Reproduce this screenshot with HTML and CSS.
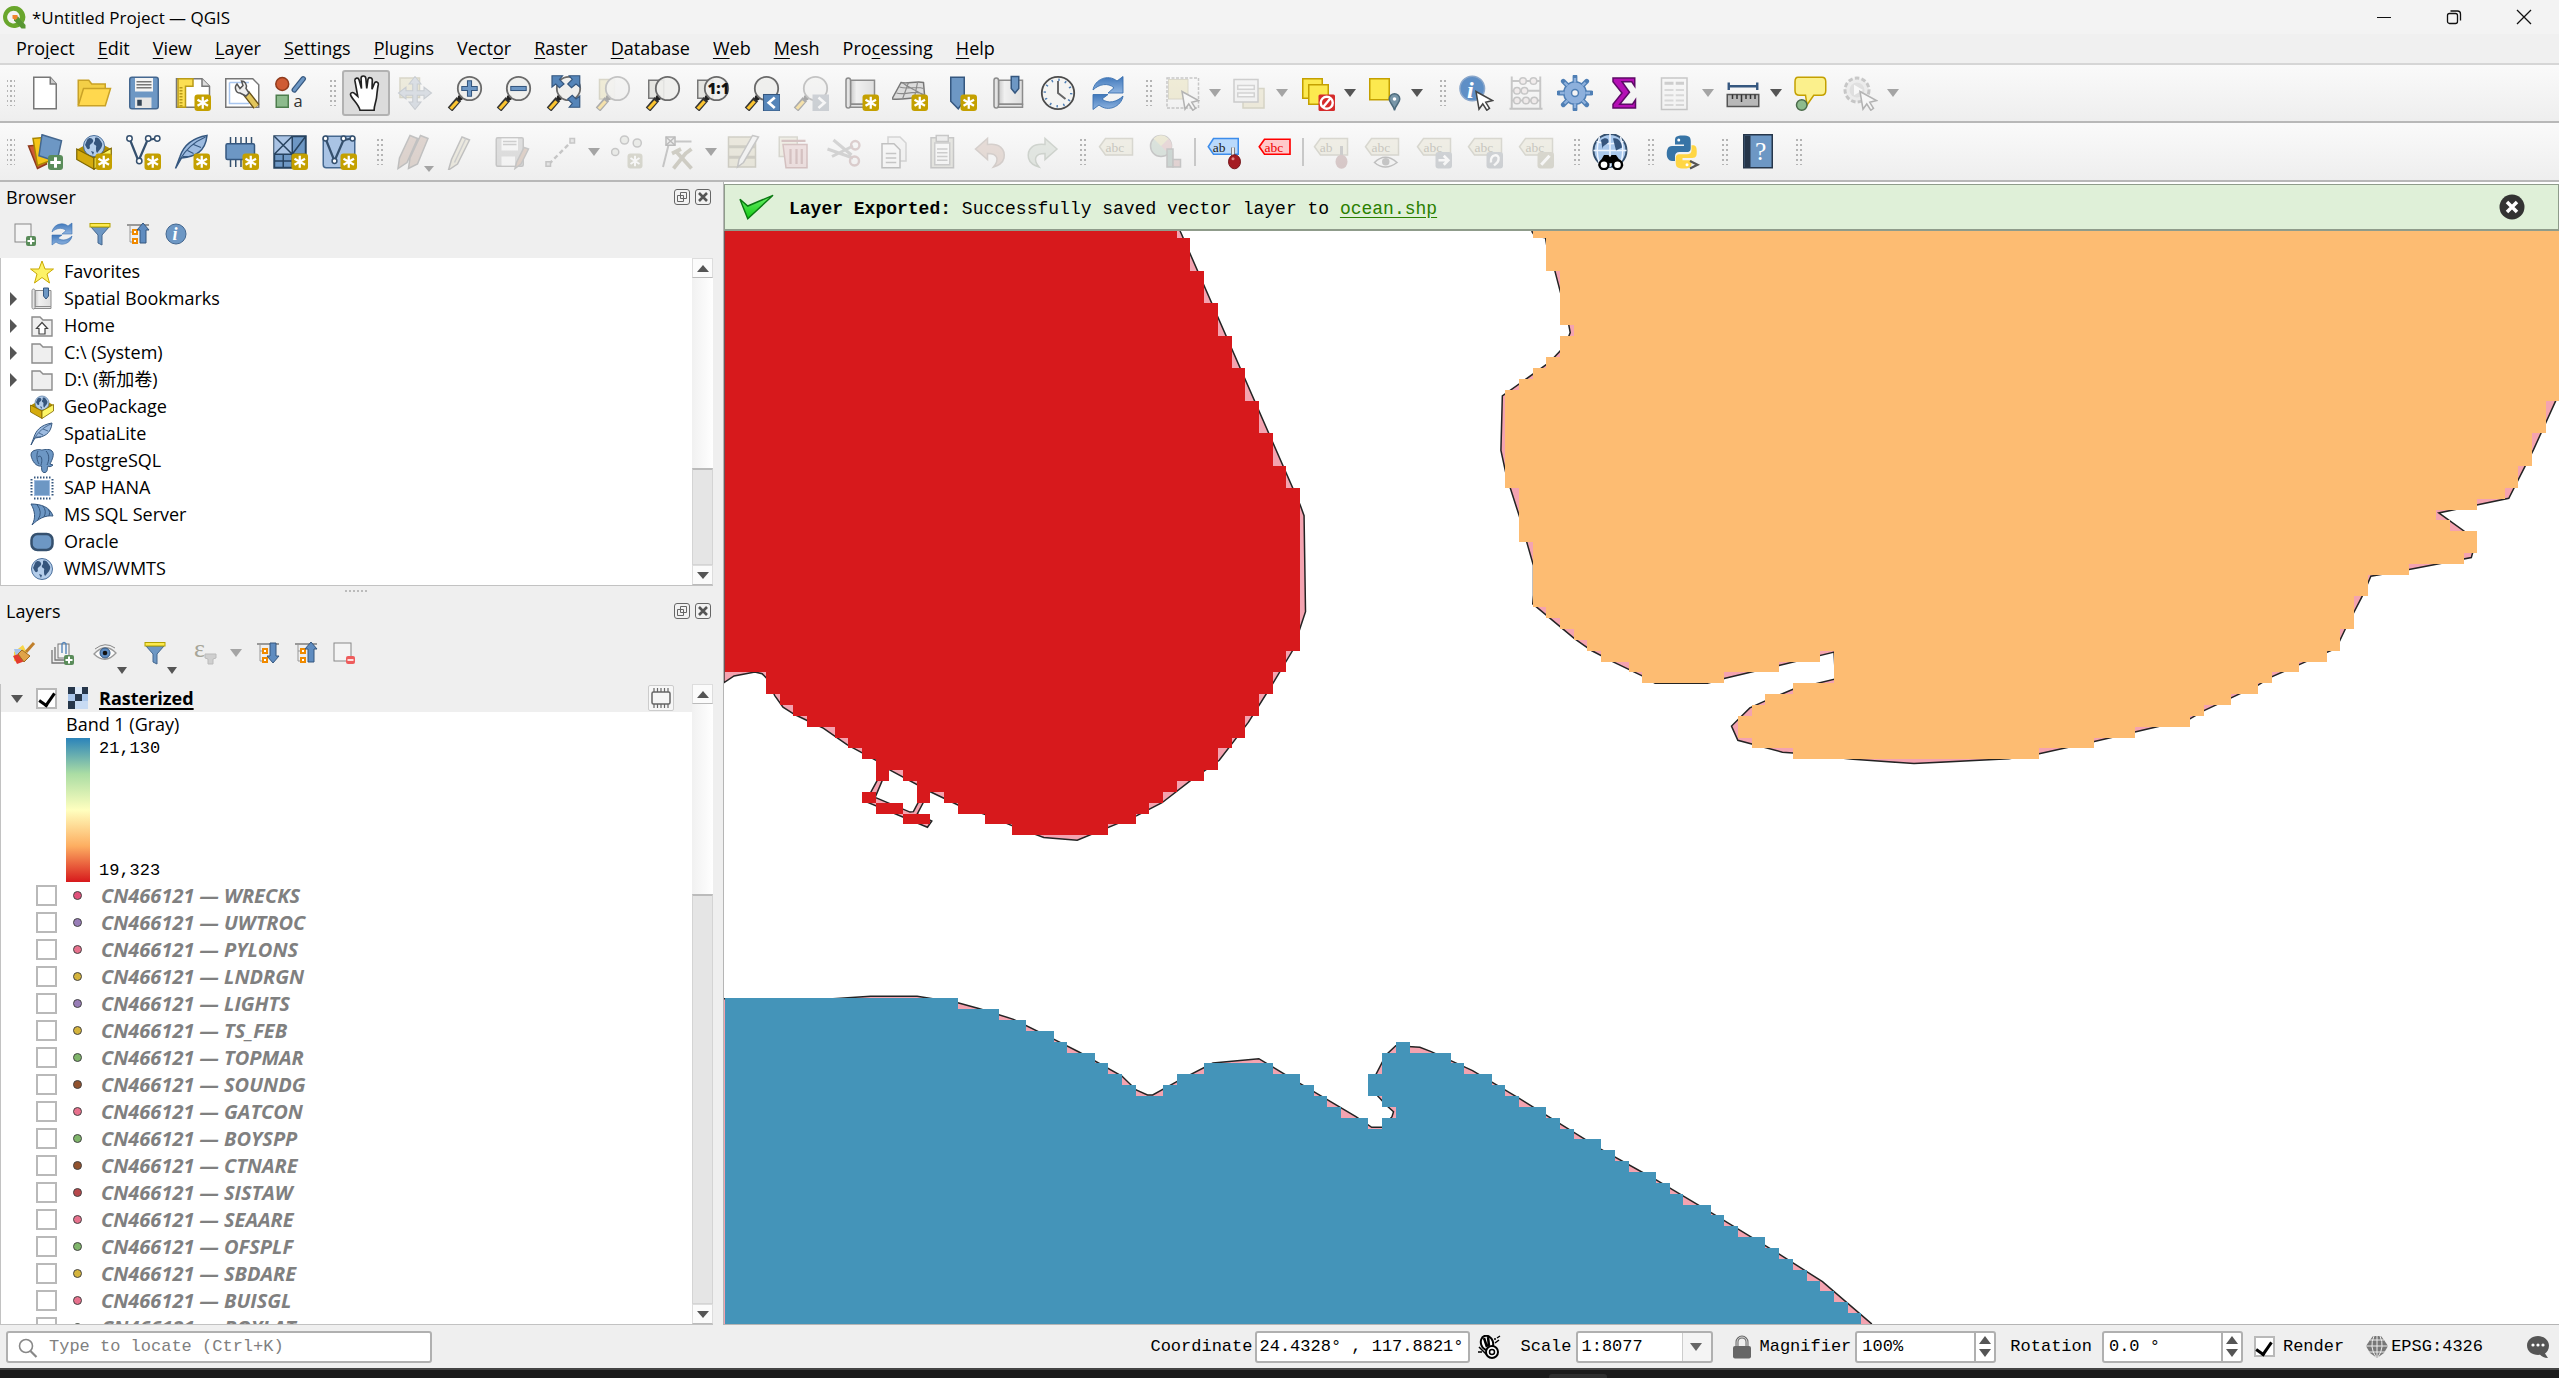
FILE: index.html
```html
<!DOCTYPE html>
<html lang="en">
<head>
<meta charset="utf-8">
<title>*Untitled Project — QGIS</title>
<link rel="stylesheet" href="styles.css">
</head>
<body>
<svg class="paints" aria-hidden="true">
<defs>
<linearGradient id="grey" x1="0" x2="1"><stop offset="0" stop-color="#c9c9c9"/><stop offset=".25" stop-color="#f0f0f0"/><stop offset="1" stop-color="#dedede"/></linearGradient>
<linearGradient id="blue" x1="0" y1="0" x2="0" y2="1"><stop offset="0" stop-color="#3f77bb"/><stop offset="1" stop-color="#8fb4e0"/></linearGradient>
<linearGradient id="tick" x1="0" y1="0" x2="0" y2="1"><stop offset="0" stop-color="#6cf26c"/><stop offset="1" stop-color="#12c812"/></linearGradient>
</defs>
</svg>
<svg class="sprite" aria-hidden="true">
<symbol id="b-new" viewBox="0 0 24 24"><rect x="13" y="13" width="11" height="11" rx="2" fill="#c4a000"/><path d="M18.500 14.500v8M15 16.500l7 4M22 16.500l-7 4" stroke="#fff" stroke-width="1.500"/></symbol>
<symbol id="b-add" viewBox="0 0 24 24"><rect x="14" y="14" width="10" height="10" rx="2" fill="#5a8c5a"/><path d="M19 15.500v7M15.500 19h7" stroke="#fff" stroke-width="2"/></symbol>
<symbol id="lens" viewBox="0 0 24 24"><path d="M8 16l-6 7" stroke="#333" stroke-width="4"/><path d="M7 17.500l-4.500 5" stroke="#fcc530" stroke-width="2.200"/><circle cx="9" cy="15" r="1.800" fill="#222"/><circle cx="15" cy="9" r="7.800" fill="#eeeeec" fill-opacity=".9" stroke="#6a6a6a" stroke-width="1.200"/></symbol>
<symbol id="cursor" viewBox="0 0 24 24"><path d="M12 11l11 6-4.500 1.200 2.500 4-1.800 1.300-2.700-4.200-2.500 3.500z" fill="#fff" stroke="#444" stroke-width="1"/></symbol>
<symbol id="tag" viewBox="0 0 24 24"><path d="M1 8.500L5 3h18v11H5z" fill="#e3dfc8" stroke="#a5a38e"/></symbol>
<symbol id="globe" viewBox="0 0 24 24"><circle cx="12" cy="12" r="10.500" fill="#b4cdea" stroke="#4a6f9c"/><path d="M5 6c2-3 5-2 6 0s-2 4-3 5 1 3-1 4-3-3-4-4M13 4c2-1 4 0 5 2s3 3 2 6-3 4-4 6-2 0-2-3 1-3-1-4-1-3 0-4M9 17l3 1-1 3z" fill="#35557d"/></symbol>

<symbol id="i-new" viewBox="0 0 24 24"><path d="M4.500 1.500h11l4 4.500v16.500h-15z" fill="#fff" stroke="#777"/><path d="M15.500 1.500v4.500h4" fill="#ccc" stroke="#777"/></symbol>
<symbol id="i-open" viewBox="0 0 24 24"><path d="M1.500 20V3.500h7l2 2.500h9v4" fill="#f3cf47" stroke="#c9a227"/><path d="M1.500 20.500L5 9h18l-3.500 11.500z" fill="#ffd84e" stroke="#c9a227"/></symbol>
<symbol id="i-save" viewBox="0 0 24 24"><rect x="2.500" y="1.500" width="19" height="21" rx="1.500" fill="#6d97c4" stroke="#44678f"/><rect x="6" y="2" width="12" height="9" fill="#f4f4f4"/><path d="M7 4.500h10M7 6.500h10M7 8.500h10" stroke="#777"/><rect x="6" y="15" width="11" height="7" fill="#e6e6e6"/><rect x="7.500" y="16.500" width="3" height="4" fill="#345"/></symbol>
<symbol id="i-layout" viewBox="0 0 24 24"><path d="M1 2.500h17l5 5v14H1z" fill="#fff" stroke="#777"/><path d="M18 2.500v5h5" fill="#ddd" stroke="#777"/><path d="M2 2.500h10v5H7v14H2z" fill="#fcdf52" stroke="#b99b18"/><path d="M4 8v13" stroke="#b99b18" stroke-dasharray="1 1" stroke-width="2"/><use href="#b-new"/></symbol>
<symbol id="i-manager" viewBox="0 0 24 24"><path d="M.5 2.500h18l4 4v15H.5z" fill="#fff" stroke="#777"/><path d="M3 5h13M3 5v14h13" stroke="#a9c6ef" fill="none"/><path d="M14 12l7 9" stroke="#665018" stroke-width="5"/><path d="M14 12l7 9" stroke="#e2c65c" stroke-width="3.200"/><path d="M8 6c-2 2-1 6 2 6l4 2 2-2-2-3c1-3-1-5-3-5l1 3-2 2z" fill="#eee" stroke="#555"/></symbol>
<symbol id="i-style" viewBox="0 0 24 24"><circle cx="5.500" cy="6" r="4.300" fill="#cf5b34" stroke="#8f3a1c"/><path d="M13.500 10l6-7.500" stroke="#35577f" stroke-width="3.600" stroke-linecap="round"/><path d="M13.500 10l6-7.500" stroke="#6d97c4" stroke-width="2" stroke-linecap="round"/><rect x="1.500" y="13.500" width="8" height="8" fill="#8dbb8d" stroke="#4d7d4d"/><text x="13" y="21.500" font-size="11" class="glyph">a</text></symbol>
<symbol id="i-hand" viewBox="0 0 24 24"><path d="M8 23.500c-1-4-4-6-6-9.500-1-2 .8-3 2.300-1.800l2.200 2L4.600 3.800c-.2-2 2.300-2.400 2.800-.5L9 9 8.700 2.300c0-2.200 3-2.200 3.200 0L12.500 9l.8-6c.4-1.800 2.900-1.500 2.900.4L16 9.500l1.600-4c.7-1.600 2.800-1 2.600.8-.7 3-.8 6-1.200 9-.4 3-1.600 5-1.600 8.200z" fill="#fff" stroke="#222" stroke-width="1.100"/></symbol>
<symbol id="i-panto" viewBox="0 0 24 24"><rect x="2" y="2" width="13" height="13" fill="#ddd6b0" stroke="#a59e78"/><path d="M12 1l4 5h-2.500v4.500H18V8l5 4-5 4v-2.500h-4.500V18H16l-4 5-4-5h2.500v-4.500H6V16l-5-4 5-4v2.500h4.500V6H8z" fill="#aab6c6" stroke="#7c8896" stroke-width=".7"/></symbol>
<symbol id="i-zin" viewBox="0 0 24 24"><use href="#lens"/><path d="M15 3.500v11M9.500 9h11" stroke="#35577f" stroke-width="3.400"/><path d="M15 4.200v9.600M10.200 9h9.600" stroke="#6d97c4" stroke-width="2"/></symbol>
<symbol id="i-zout" viewBox="0 0 24 24"><use href="#lens"/><path d="M9.500 9h11" stroke="#35577f" stroke-width="3.400"/><path d="M10.200 9h9.600" stroke="#6d97c4" stroke-width="2"/></symbol>
<symbol id="i-zfull" viewBox="0 0 24 24"><use href="#lens"/><path d="M4 .5h7L9 3l3 3-3 2.500L6.500 6 4 8zM22.500.5h-7l2 2.500-3 3L17 8.500 20 6l2.500 2zM22.500 21.500h-7l2-2.500-3-3 3-2.500 2.500 2.500 2.500-2z" fill="#5585b9" stroke="#35577f" stroke-width=".8"/></symbol>
<symbol id="i-zsel" viewBox="0 0 24 24"><rect x="3" y="3" width="10" height="13" fill="#e3d9a0" stroke="#a59e78"/><use href="#lens"/></symbol>
<symbol id="i-zlay" viewBox="0 0 24 24"><rect x="2.500" y="3.500" width="10" height="12" fill="#e4e4e0" stroke="#777"/><use href="#lens"/></symbol>
<symbol id="i-znat" viewBox="0 0 24 24"><use href="#i-zlay"/><text x="9" y="12.500" font-size="10" class="glyph heavy">1:1</text></symbol>
<symbol id="i-zlast" viewBox="0 0 24 24"><use href="#lens"/><rect x="13" y="13" width="11" height="11" fill="#5585b9" stroke="#35577f" stroke-width=".7"/><path d="M20.500 15l-4 3.500 4 3.500" fill="none" stroke="#fff" stroke-width="1.800"/></symbol>
<symbol id="i-znext" viewBox="0 0 24 24"><use href="#lens"/><rect x="13" y="13" width="11" height="11" fill="#8b95a1"/><path d="M17 15l4 3.500-4 3.500" fill="none" stroke="#fff" stroke-width="1.800"/></symbol>
<symbol id="scroll" viewBox="0 0 24 24"><path d="M5 3.500h16v16H5z" fill="url(#grey)" stroke="#8c8c8c"/><path d="M2 3.500c0-2 3-2 3 0v17c0 2-3 2-3 0zM4 21.500h17v-2H5" fill="#e4e4e4" stroke="#8c8c8c"/></symbol>
<symbol id="i-mapview" viewBox="0 0 24 24"><use href="#scroll"/><use href="#b-new"/></symbol>
<symbol id="i-3d" viewBox="0 0 24 24"><path d="M6 5c4 1 10-1 15 0l1 12c-6-4-12 0-22-1z" fill="#dcdcdc" stroke="#777"/><path d="M5 8c6 2 11-1 16 1M3 12c6 2 12-3 19 1.500M11 5l-4 11M17 5l-2 10M7 5c4 4 10 5 14 9" fill="none" stroke="#8a8a8a" stroke-width=".8"/><use href="#b-new"/></symbol>
<symbol id="i-newbm" viewBox="0 0 24 24"><path d="M6.500 1.500h9V17l-4 5.500-5-5z" fill="#6d97c4" stroke="#35577f"/><use href="#b-new"/></symbol>
<symbol id="i-bm" viewBox="0 0 24 24"><use href="#scroll"/><path d="M13.500 1h5v8L16 12l-2.500-3z" fill="#6d97c4" stroke="#35577f"/></symbol>
<symbol id="i-clock" viewBox="0 0 24 24"><circle cx="12" cy="12" r="10.800" fill="#f4f4f2" stroke="#4b4b4b" stroke-width="1.200"/><circle cx="12" cy="12" r="8.800" fill="none" stroke="#4f7fb5" stroke-width="1.600" stroke-dasharray="1 3.600"/><path d="M12 4v8l5 4" fill="none" stroke="#666" stroke-width="1.300"/></symbol>
<symbol id="i-refresh" viewBox="0 0 24 24"><path d="M2 10C3 3 12-1 18 4l4-3v11H12l4-3.500C12 5 6 6 2 10z" fill="url(#blue)" stroke="#3a70b0" stroke-width=".6"/><path d="M22 14c-1 7-10 11-16 6l-4 3V13h10l-4 3c4 3.500 10 2 14-2z" fill="url(#blue)" stroke="#3a70b0" stroke-width=".6"/></symbol>
<symbol id="i-select" viewBox="0 0 24 24"><rect x="2" y="2" width="21" height="20" fill="none" stroke="#777" stroke-dasharray="2 1"/><rect x="3" y="3" width="13" height="13" fill="#e3d9a0" stroke="#a59e78" stroke-width=".6"/><use href="#cursor"/></symbol>
<symbol id="i-form" viewBox="0 0 24 24"><rect x="8" y="9" width="14" height="13" fill="#e3d9b0" stroke="#a59e78"/><rect x="2" y="3" width="16" height="15" fill="#eee" stroke="#888"/><path d="M4.500 7h11v2.500h-11zM4.500 12h11v2.500h-11z" fill="#fff" stroke="#999"/></symbol>
<symbol id="i-desel" viewBox="0 0 24 24"><rect x="2.500" y="2.500" width="13" height="13" fill="#fce94f" stroke="#c4a000"/><rect x="6.500" y="6.500" width="13" height="13" fill="#fce94f" stroke="#c4a000"/><rect x="13" y="13" width="11" height="11" rx="1" fill="#d52b2b"/><circle cx="18.500" cy="18.500" r="4" fill="none" stroke="#fff" stroke-width="1.600"/><path d="M16 21.500l5-6" stroke="#fff" stroke-width="1.600"/></symbol>
<symbol id="i-selloc" viewBox="0 0 24 24"><rect x="2.500" y="2.500" width="13" height="14" fill="#fce94f" stroke="#c4a000"/><path d="M19 23.500c-1-4-3.500-5-3.500-7.500a3.500 3.500 0 017 0c0 2.500-2.500 3.500-3.500 7.500z" fill="#7896a8" stroke="#4c6a7c"/><circle cx="19" cy="16" r="1.200" fill="#fff"/></symbol>
<symbol id="i-ident" viewBox="0 0 24 24"><circle cx="9.500" cy="9" r="8.200" fill="#5f8fc6" stroke="#8aa7cb"/><text x="6" y="15" font-size="16" class="info">i</text><use href="#cursor"/></symbol>
<symbol id="i-abacus" viewBox="0 0 24 24"><path d="M2.500 1v21M21.500 1v21M1 22.500h22M2 4h20M2 10.500h20M2 17h20" stroke="#777" stroke-width="1.300"/><g fill="#e9dcdc" stroke="#777"><circle cx="10" cy="4" r="2.200"/><circle cx="17" cy="4" r="2.200"/><circle cx="6" cy="10.500" r="2.200"/><circle cx="11" cy="10.500" r="2.200"/><circle cx="6" cy="17" r="2.200"/><circle cx="12" cy="17" r="2.200"/><circle cx="17.500" cy="17" r="2.200"/></g></symbol>
<symbol id="i-gear" viewBox="0 0 24 24"><path d="M12 1v22M1 12h22M4.200 4.200l15.600 15.600M19.800 4.200L4.200 19.800" stroke="#4f7fb5" stroke-width="3.200" stroke-linecap="round"/><circle cx="12" cy="12" r="7.500" fill="#8db0dc" stroke="#4f7fb5"/><path d="M12 2v3M12 19v3M2 12h3M19 12h3M5 5l2 2M17 17l2 2M19 5l-2 2M7 17l-2 2" stroke="#8db0dc" stroke-width="1.600"/><circle cx="12" cy="12" r="2.300" fill="#f4f4f4" stroke="#4f7fb5"/></symbol>
<symbol id="i-sigma" viewBox="0 0 24 24"><path d="M4 2h14.500v5.500l-2-3H10l5 7-6.500 8H17l2-3V22H4v-2.500l6-7.500-6-7.500z" fill="#b50fb5" stroke="#5d0a66"/></symbol>
<symbol id="i-table" viewBox="0 0 24 24"><rect x="3" y="2" width="17" height="21" fill="#f6f6f6" stroke="#777"/><path d="M5 5.500h6M12.500 5.500H18" stroke="#888" stroke-width="2"/><path d="M5 10h6M5 13.500h6M5 17h6M5 20h6M12.500 10H18M12.500 13.500H18M12.500 17H18M12.500 20H18" stroke="#aaa" stroke-width="1.200"/></symbol>
<symbol id="i-ruler" viewBox="0 0 24 24"><path d="M3 7.500h18M2.500 5v5M21.500 5v5" stroke="#35577f" stroke-width="1.600"/><rect x="1.500" y="13" width="21" height="8" fill="#b8b8b8" stroke="#555"/><path d="M5 13v3M8 13v3M11 13v5M14 13v3M17 13v3M20 13v3" stroke="#333"/></symbol>
<symbol id="i-tip" viewBox="0 0 24 24"><path d="M4 1.500h16q2.500 0 2.500 3v6q0 3-3 3h-5L10 20l-1-6.500H5q-3 0-3-3v-6q0-3 2-3z" fill="#fbf08c" stroke="#c4a000"/><circle cx="6.500" cy="20" r="3.500" fill="#8dbb8d" stroke="#4b6b4b"/></symbol>
<symbol id="i-action" viewBox="0 0 24 24"><circle cx="10" cy="10" r="8" fill="#ddd" stroke="#777" stroke-width="2" stroke-dasharray="3 1.500"/><circle cx="10" cy="10" r="5" fill="#bbb"/><path d="M8 6.500l6 3.500-6 3.500z" fill="#fff"/><use href="#cursor"/></symbol>

<symbol id="i-dsm" viewBox="0 0 24 24"><path d="M1 8l9-1 3 13-6 3z" fill="#cf5b34" stroke="#8f3a1c"/><path d="M4 3l10-1 1 16-8 3z" fill="#f5c518" stroke="#a98600"/><path d="M10 .5l13 4-3 14-12-4z" fill="#6d97c4" stroke="#44678f"/><use href="#b-add"/></symbol>
<symbol id="i-gpkg" viewBox="0 0 24 24"><path d="M.5 10.500L12 4l11.500 6L12 18z" fill="#b08c00"/><svg x="4" y="0" width="16" height="16"><use href="#globe"/></svg><path d="M.5 10L12 16v7.500L.5 17z" fill="#d5ab0d" stroke="#7d6500" stroke-width=".8"/><path d="M23.500 9.500L12 16v7.500L23.500 16z" fill="#fdf668" stroke="#7d6500" stroke-width=".8"/></symbol>
<symbol id="i-newgpkg" viewBox="0 0 24 24"><use href="#i-gpkg"/><use href="#b-new"/></symbol>
<symbol id="i-newshp" viewBox="0 0 24 24"><path d="M3 3l6 15 6-14 6-1" fill="none" stroke="#35506e" stroke-width="1.500"/><g fill="#fff" stroke="#35506e"><circle cx="3" cy="3" r="1.800"/><circle cx="9.500" cy="18" r="1.800"/><circle cx="15.500" cy="3" r="1.800"/><circle cx="21.500" cy="3" r="1.800"/></g><use href="#b-new"/></symbol>
<symbol id="i-feather" viewBox="0 0 24 24"><path d="M22 1C10 3 6 9 4 15L1 23l4-7c9-1 16-4 17-15z" fill="#9dbbe0" stroke="#35577f"/><path d="M4 17C8 10 14 5 21 2M9 11l4 2M13 7l5 2M6 15h5" fill="none" stroke="#35577f" stroke-width=".8"/></symbol>
<symbol id="i-newspl" viewBox="0 0 24 24"><use href="#i-feather"/><use href="#b-new"/></symbol>
<symbol id="i-mem" viewBox="0 0 24 24"><path d="M5 2v20M8.500 2v20M12 2v20M15.500 2v20M19 2v20" stroke="#35506e"/><rect x="2" y="6.500" width="19" height="10.500" rx="1" fill="#6d97c4" stroke="#35577f"/><use href="#b-new"/></symbol>
<symbol id="i-mesh" viewBox="0 0 24 24"><path d="M1.500 1.500h21v21h-21z" fill="#6d97c4" stroke="#26425f" stroke-width="1.300"/><path d="M1.500 1.500h12v12h-12z" fill="#a9c3e4"/><path d="M1.500 13.500h21M13.500 1.500v21M1.500 1.500l12 12M1.500 13.500l12-12M13.500 13.500l9-12M1.500 18h12M7.500 13.500v9" stroke="#26425f" fill="none"/><use href="#b-new"/></symbol>
<symbol id="i-virt" viewBox="0 0 24 24"><rect x="1.500" y="1.500" width="21" height="21" rx="2" fill="#a9c3e4" stroke="#44678f"/><path d="M3 3l6 15 6-14 6-1" fill="none" stroke="#35506e" stroke-width="1.500"/><g fill="#fff" stroke="#35506e"><circle cx="3" cy="3" r="1.600"/><circle cx="9" cy="18" r="1.600"/><circle cx="15" cy="3" r="1.600"/><circle cx="21" cy="3" r="1.600"/></g><use href="#b-new"/></symbol>
<symbol id="i-pencil" viewBox="0 0 24 24"><path d="M12 2l5 2-8 16-6 4 2-7z" fill="#d9d2b8" stroke="#666"/><path d="M14.500 3L7 19" stroke="#888"/></symbol>
<symbol id="i-pencils" viewBox="0 0 24 24"><path d="M10 1l5 2-7 16-6 4 1-7zM17 1l5 2-7 17-6 3 1-7z" fill="#b59a8c" stroke="#666"/></symbol>
<symbol id="i-saveed" viewBox="0 0 24 24"><rect x="1.500" y="2.500" width="18" height="19" rx="1" fill="#b5b5b5" stroke="#777"/><path d="M5 3h11v8H5zM5 15h9v6H5z" fill="#f5f5f5"/><path d="M6 5h9M6 7h9" stroke="#888"/><path d="M20 9l3 1-5 10-4 3 1-4z" fill="#b8937c" stroke="#777"/></symbol>
<symbol id="i-line" viewBox="0 0 24 24"><path d="M4 20L19 5" stroke="#777" stroke-width="1.600" stroke-dasharray="3 2"/><path d="M2 18.500h3v3H2zM18 3h3v3h-3z" fill="#ccc" stroke="#777"/></symbol>
<symbol id="i-points" viewBox="0 0 24 24"><g fill="#d6dad2" stroke="#777"><circle cx="9" cy="4" r="2.700"/><circle cx="17.500" cy="6" r="2.700"/><circle cx="2.800" cy="12" r="2.400"/></g><rect x="11" y="13" width="10" height="10" rx="2" fill="#a6a58d"/><path d="M16 14.500v7M13 16l6 4M19 16l-6 4" stroke="#fff" stroke-width="1.300"/></symbol>
<symbol id="i-vertex" viewBox="0 0 24 24"><path d="M2 22L6 6M8 5h13" stroke="#777" stroke-width="1.300"/><rect x="4" y="2" width="6" height="5.500" fill="#ddd" stroke="#555"/><path d="M4 2l6 5.500M10 2L4 7.500" stroke="#555"/><path d="M9 23l8-10 4-3M11 12l10 11M8 13l6-3" stroke="#8f8a72" stroke-width="2.500"/></symbol>
<symbol id="i-attr" viewBox="0 0 24 24"><path d="M1 2h18v6H1zM1 9h18v6H1zM1 16h18v6H1z" fill="#d5cfb2" stroke="#8f8a72"/><path d="M17 1l4 1-10 17-4 3 1-5z" fill="#eee" stroke="#777"/></symbol>
<symbol id="i-del" viewBox="0 0 24 24"><rect x="1.500" y="2" width="12" height="13" fill="#e3dfc8" stroke="#a5a38e"/><path d="M4 7h16v15.500H6z" fill="#e0bcbc" stroke="#a06a6a"/><path d="M3 4.500h16M9 10v10M13 10v10M16.500 10v10" stroke="#a06a6a" stroke-width="1.500"/></symbol>
<symbol id="i-cut" viewBox="0 0 24 24"><path d="M1 10l17 6M5 4l12 10M4 15l14-7" stroke="#999" stroke-width="2"/><circle cx="19.500" cy="7.500" r="2.800" fill="none" stroke="#b08a8a" stroke-width="1.600"/><circle cx="19" cy="18" r="3" fill="none" stroke="#b08a8a" stroke-width="1.600"/></symbol>
<symbol id="i-copy" viewBox="0 0 24 24"><path d="M8 2h8l4 4v12H8z" fill="#eee" stroke="#999"/><path d="M4 6.500h8l4 4v12H4z" fill="#f8f8f8" stroke="#666"/><path d="M6.500 13h7M6.500 16h7M6.500 19h7" stroke="#777"/></symbol>
<symbol id="i-paste" viewBox="0 0 24 24"><rect x="4" y="2.500" width="15" height="20" fill="#c9c9bd" stroke="#777"/><path d="M6.500 6h10v14.500h-10z" fill="#f8f8f8" stroke="#888"/><rect x="7.500" y="1" width="8" height="4" fill="#ddd" stroke="#777"/><path d="M8 10h7M8 12.500h7M8 15h7M8 17.500h7" stroke="#888"/></symbol>
<symbol id="i-undo" viewBox="0 0 24 24"><path d="M1 10l8-7v4c8-1 12 3 11 9-1 4-4 5-7 6 4-5 3-9-4-9v4z" fill="#c9ada0" stroke="#9d8d85"/></symbol>
<symbol id="i-redo" viewBox="0 0 24 24"><path d="M22 10l-8-7v4C6 6 2 10 3 16c1 4 4 5 7 6-4-5-3-9 4-9v4z" fill="#c2cdc0" stroke="#8d998a"/></symbol>
<symbol id="i-lab" viewBox="0 0 24 24"><use href="#tag"/><text x="5" y="12" font-size="9" class="lab">abc</text></symbol>
<symbol id="i-diag" viewBox="0 0 24 24"><circle cx="8" cy="8" r="7" fill="#a9bfb0" stroke="#777"/><path d="M8 8l5-5c3 3 3 7 0 10z" fill="#cfa5a5"/><path d="M8 8L3 3c3-3 7-3 10 0z" fill="#d9d2a0"/><path d="M12 10h4v12h-4z" fill="#8aa39a" stroke="#777"/><path d="M16 17h5v5h-5z" fill="#c49a9a" stroke="#777"/></symbol>
<symbol id="i-pinlab" viewBox="0 0 24 24"><path d="M1.500 8.500L5 3h16.500v10.500H5z" fill="#b9d9fb" stroke="#3c8ceb"/><text x="4.500" y="12" font-size="9" class="lab dark">ab</text><path d="M18 16V9" stroke="#777" stroke-width="2.600"/><path d="M18 16V9" stroke="#eee" stroke-width="1.400"/><ellipse cx="19" cy="18.500" rx="4" ry="4.700" fill="#a51c22" stroke="#6d0d12" stroke-width=".6"/><circle cx="18" cy="16.500" r="1" fill="#e08a8a"/></symbol>
<symbol id="i-redlab" viewBox="0 0 24 24"><path d="M1.500 8.500L5 3.500h17v10H5z" fill="#ffc9c9" stroke="#f00" stroke-width="1.100"/><text x="5" y="12" font-size="9" class="lab red">abc</text></symbol>
<symbol id="i-lpin" viewBox="0 0 24 24"><use href="#tag"/><text x="4.500" y="12" font-size="9" class="lab">ab</text><path d="M19 16V8" stroke="#888" stroke-width="2"/><ellipse cx="19" cy="18.500" rx="4" ry="4.700" fill="#a88080"/></symbol>
<symbol id="i-leye" viewBox="0 0 24 24"><use href="#i-lab"/><path d="M7 19q7-7 15 0-8 6-15 0z" fill="#f4f4f4" stroke="#666"/><circle cx="14.500" cy="18.500" r="2.500" fill="#777"/></symbol>
<symbol id="i-lmove" viewBox="0 0 24 24"><use href="#i-lab"/><rect x="13" y="12" width="11" height="11" rx="2" fill="#8f979f"/><path d="M15 17.500h6M18.500 14.500l3 3-3 3" stroke="#fff" stroke-width="1.800" fill="none"/></symbol>
<symbol id="i-lrot" viewBox="0 0 24 24"><use href="#i-lab"/><rect x="13" y="12" width="11" height="11" rx="2" fill="#8f979f"/><path d="M16 19c-1-6 6-6 5-2 0 2-2 3-3 4" stroke="#fff" stroke-width="1.600" fill="none"/></symbol>
<symbol id="i-ledit" viewBox="0 0 24 24"><use href="#i-lab"/><rect x="13" y="12" width="11" height="11" rx="2" fill="#a7a48d"/><path d="M15.500 20.500l5.500-6" stroke="#fff" stroke-width="2"/></symbol>
<symbol id="i-search" viewBox="0 0 24 24"><circle cx="12" cy="11" r="11" fill="#a9c8ec" stroke="#35506e" stroke-width="1.300"/><path d="M1 11h22M12 0v22M3 5q9 3 18 0M5 2q-3 9 0 18M19 2q3 9 0 18" stroke="#eef5ff" fill="none"/><path d="M6 4c3-2 5-1 5 1s-4 2-4 5M14 3c3-1 6 2 6 6l-4 2z" fill="#35557d"/><path d="M8 14h3l1 1.500 1-1.500h3l5 7h-7v-1.500h-4V21H4z" fill="#000"/><circle cx="8" cy="20.500" r="3" fill="#fff" stroke="#000" stroke-width="1.600"/><circle cx="17" cy="20.500" r="3" fill="#fff" stroke="#000" stroke-width="1.600"/></symbol>
<symbol id="i-py" viewBox="0 0 24 24"><path d="M11 1c-5 0-5 1.500-5 4v2h6v1H4c-3 0-3.500 3-3.500 5.500S2 18 4 18h2v-3c0-2 1-3 3-3h5c2 0 2.500-1 2.500-3V5c0-3-1-4-5.500-4z" fill="#3774a6"/><circle cx="8.500" cy="4" r="1" fill="#fff"/><path d="M12 23c5 0 5-1.500 5-4v-1.500h-6V16h6.500c3 0 3-2 3-4.500S20 7.500 18 7.500h-1v3c0 2-1 3-3 3H9c-2 0-2.500 1-2.500 3V19c0 3 1 4 5.500 4z" fill="#ffd644"/><circle cx="14" cy="20.500" r="1" fill="#fff"/><path d="M16 18l5 2.500-5 2.500" fill="none" stroke="#555" stroke-width="1.500"/></symbol>
<symbol id="i-help" viewBox="0 0 24 24"><rect x="2.500" y=".5" width="19" height="22" fill="#6d97c4" stroke="#26364a"/><rect x="3" y="1" width="4" height="21" fill="#26364a"/><text x="10" y="17.500" font-size="17" class="help">?</text></symbol>

<symbol id="i-addlay" viewBox="0 0 24 24"><rect x="3" y="2" width="16" height="18" fill="#f4f4f4" stroke="#888"/><use href="#b-add"/></symbol>
<symbol id="i-remlay" viewBox="0 0 24 24"><rect x="2" y="2" width="17" height="18" fill="#f4f4f4" stroke="#888"/><rect x="14" y="15" width="9" height="8" rx="2" fill="#ee5c5c"/><path d="M15.500 19h6" stroke="#fff" stroke-width="1.600"/></symbol>
<symbol id="i-funnel" viewBox="0 0 24 24"><path d="M3 5h18l-7 8v10l-4-2v-8z" fill="#6d97c4" stroke="#44678f"/><rect x="2" y="1.500" width="20" height="3.500" fill="#fce94f" stroke="#b3a100"/></symbol>
<symbol id="tree" viewBox="0 0 24 24"><path d="M1 3h22" stroke="#999" stroke-width="2"/><path d="M4 3v17h5M4 10h5" fill="none" stroke="#999"/><path d="M7 8h4v4H7zM7 17h4v4H7z" fill="#fff" stroke="#f08a00" stroke-width="2"/></symbol>
<symbol id="i-collapse" viewBox="0 0 24 24"><use href="#tree"/><path d="M17 1l6 7h-3v13h-6V8h-3z" fill="#5f8cc0" stroke="#35577f"/></symbol>
<symbol id="i-expand" viewBox="0 0 24 24"><use href="#tree"/><path d="M17 22l6-7h-3V2h-6v13h-3z" fill="#5f8cc0" stroke="#35577f"/></symbol>
<symbol id="i-info" viewBox="0 0 24 24"><circle cx="12" cy="12" r="10" fill="#6d97c4" stroke="#44678f"/><text x="8.500" y="18" font-size="18" class="info">i</text></symbol>
<symbol id="i-star" viewBox="0 0 24 24"><path d="M12 1l3 8h8.500l-6.500 5 2.500 9-7.500-5.500L4.500 23 7 14 .5 9H9z" fill="#fdf266" stroke="#c9a800"/></symbol>
<symbol id="i-folder" viewBox="0 0 24 24"><path d="M2 22V3h8l3 3h9v16z" fill="#efefef" stroke="#8c8c8c" stroke-width="1.400"/></symbol>
<symbol id="i-home" viewBox="0 0 24 24"><use href="#i-folder"/><path d="M12 8.500l5.500 6H15V20H9v-5.500H6.500z" fill="#fff" stroke="#444" stroke-width="1.200"/></symbol>
<symbol id="i-pg" viewBox="0 0 24 24"><path d="M6 1c4-1 5 0 6 0s7-2 10 1 0 9-2 13l3 1c-2 2-4 2-5 1-1 2 0 6-3 6.500s-3.500-2-3.500-6.500C6 18 2 12 1 6c0-3 2-4.500 5-5z" fill="#6d97c4" stroke="#35577f"/><path d="M8 2C6 6 7 12 9 15M16 2c4 4 3 10 1 14M8 8c3-3 5 2 3 8" fill="none" stroke="#35577f"/></symbol>
<symbol id="i-hana" viewBox="0 0 24 24"><path d="M4 1.500h17M4 22.500h17M1.500 3v18M22.500 3v18" stroke="#35577f" stroke-width="2" stroke-dasharray="1.500 1.500"/><rect x="4.500" y="4.500" width="15" height="15" fill="#6d97c4" stroke="#9dbbe0"/></symbol>
<symbol id="i-mssql" viewBox="0 0 24 24"><path d="M1 1c10 0 19 3 22 12-8-1-15 3-21 9C6 15 5 8 1 1z" fill="#6d97c4" stroke="#35577f"/><path d="M7 1.500q6 8 1 15M13 3q4 5 1 11M18 6q3 3 1 7" fill="none" stroke="#35577f"/></symbol>
<symbol id="i-oracle" viewBox="0 0 24 24"><rect x="1.500" y="4" width="21" height="16" rx="6" fill="#6d97c4" stroke="#35506e" stroke-width="2.500"/></symbol>
<symbol id="i-brush" viewBox="0 0 24 24"><path d="M2 11l9-7 4 8-8 9-5-1z" fill="#f8d648"/><path d="M2 8h7v7H4z" fill="#a7c4ea"/><path d="M1 15l8-3 4 8-8 3z" fill="#e33b2e"/><path d="M10 9l8 6-6 6-6-8z" fill="#e0a34a" stroke="#a06a20"/><path d="M14 11l8-9" stroke="#c07f2b" stroke-width="3"/></symbol>
<symbol id="i-group" viewBox="0 0 24 24"><path d="M2 9v13h13M5 6v13h12" fill="none" stroke="#777" stroke-width="1.300"/><rect x="8" y="3" width="11" height="14" fill="#f4f4f4" stroke="#777"/><path d="M12 12V3q2-3 4 0v10" stroke="#5585b9" fill="none" stroke-width="1.400"/><use href="#b-add"/></symbol>
<symbol id="i-eye" viewBox="0 0 24 24"><path d="M1 13Q12 1 23 12q-11 12-22 1z" fill="#fafafa" stroke="#999" stroke-width="1.300"/><circle cx="12" cy="12" r="5" fill="#5f8cc0" stroke="#35577f"/><circle cx="12" cy="12" r="2.300" fill="#111"/><path d="M2 8Q12 0 22 7" fill="none" stroke="#888"/></symbol>
<symbol id="i-eps" viewBox="0 0 24 24"><text x="1" y="16" font-size="26" class="lab">ε</text><path d="M12 13h11v4l-3 1v5h-5v-5l-3-1z" fill="#bbb" stroke="#999"/></symbol>
<symbol id="i-raster" viewBox="0 0 24 24"><path d="M2 1h20v22H2z" fill="#aac6ea"/><path d="M2 1h7v7H2zM16 1h6v7h-6zM9 8h7v7H9zM2 15h7v8H2z" fill="#26364a"/><path d="M9 1h7v7H9z" fill="#dce8f7"/><path d="M16 15h6v8H9v-8z" fill="#c8dbf3"/></symbol>
<symbol id="i-chip" viewBox="0 0 24 24"><path d="M5 2v20M8.500 2v20M12 2v20M15.500 2v20M19 2v20" stroke="#666" stroke-width="1.200"/><rect x="3" y="6" width="18" height="12" rx="1.500" fill="#f6f6f6" stroke="#666" stroke-width="1.500"/></symbol>
<symbol id="i-float" viewBox="0 0 16 16"><rect x=".5" y=".5" width="15" height="15" rx="2.500" fill="#f2f2f2" stroke="#666"/><path d="M6.500 3.500h6v6h-6zM3.500 6.500h6v6h-6z" fill="#f2f2f2" stroke="#666"/></symbol>
<symbol id="i-x" viewBox="0 0 16 16"><rect x=".5" y=".5" width="15" height="15" rx="2.500" fill="#f2f2f2" stroke="#666"/><path d="M4 4l8 8M12 4l-8 8" stroke="#555" stroke-width="2.600"/></symbol>
</svg>

<header class="titlebar">
<svg class="logo" viewBox="0 0 24 24"><path d="M12 1a11 11 0 107 19.500l-3.500-3.500A6.300 6.300 0 1117.500 14l4 4A11 11 0 0012 1z" fill="#69a62c"/><path d="M12 11.500h4l7.500 8.500v3.500h-4L12 15.500z" fill="#589632"/><path d="M10.500 10h5v3l-2 2-3-1.500z" fill="#f0862c"/></svg>
<span class="title">*Untitled Project — QGIS</span>
<div class="winbtns">
<button aria-label="Minimize"><svg viewBox="0 0 16 16"><path d="M1 8.500h14" stroke="#111"/></svg></button>
<button aria-label="Restore"><svg viewBox="0 0 16 16"><rect x="1.500" y="4.500" width="10" height="10" rx="2" fill="none" stroke="#111" stroke-width="1.300"/><path d="M4.500 2h7q3 0 3 3v6.500" fill="none" stroke="#111" stroke-width="1.300"/></svg></button>
<button aria-label="Close"><svg viewBox="0 0 16 16"><path d="M1 1l14 14M15 1L1 15" stroke="#111" stroke-width="1.300"/></svg></button>
</div>
</header>
<nav class="menubar">
<button>Pro<u>j</u>ect</button><button><u>E</u>dit</button><button><u>V</u>iew</button><button><u>L</u>ayer</button><button><u>S</u>ettings</button><button><u>P</u>lugins</button><button>Vect<u>o</u>r</button><button><u>R</u>aster</button><button><u>D</u>atabase</button><button><u>W</u>eb</button><button><u>M</u>esh</button><button>Pro<u>c</u>essing</button><button><u>H</u>elp</button>
</nav>
<div class="toolbar">
<i class="handle first"></i>
<div class="group project">
<button aria-label="New project"><svg><use href="#i-new"/></svg></button>
<button aria-label="Open project"><svg><use href="#i-open"/></svg></button>
<button aria-label="Save project"><svg><use href="#i-save"/></svg></button>
<button aria-label="New layout"><svg><use href="#i-layout"/></svg></button>
<button aria-label="Layout manager"><svg><use href="#i-manager"/></svg></button>
<button aria-label="Style manager"><svg><use href="#i-style"/></svg></button>
</div>
<i class="handle"></i>
<div class="group navigate">
<button class="on" aria-label="Pan map"><svg><use href="#i-hand"/></svg></button>
<button disabled aria-label="Pan to selection"><svg><use href="#i-panto"/></svg></button>
<button aria-label="Zoom in"><svg><use href="#i-zin"/></svg></button>
<button aria-label="Zoom out"><svg><use href="#i-zout"/></svg></button>
<button aria-label="Zoom full"><svg><use href="#i-zfull"/></svg></button>
<button disabled aria-label="Zoom to selection"><svg><use href="#i-zsel"/></svg></button>
<button aria-label="Zoom to layer"><svg><use href="#i-zlay"/></svg></button>
<button aria-label="Zoom to native resolution"><svg><use href="#i-znat"/></svg></button>
<button aria-label="Zoom last"><svg><use href="#i-zlast"/></svg></button>
<button disabled aria-label="Zoom next"><svg><use href="#i-znext"/></svg></button>
<button aria-label="New map view"><svg><use href="#i-mapview"/></svg></button>
<button aria-label="New 3D map view"><svg><use href="#i-3d"/></svg></button>
<button aria-label="New bookmark"><svg><use href="#i-newbm"/></svg></button>
<button aria-label="Show bookmarks"><svg><use href="#i-bm"/></svg></button>
<button aria-label="Temporal controller"><svg><use href="#i-clock"/></svg></button>
<button aria-label="Refresh"><svg><use href="#i-refresh"/></svg></button>
</div>
<i class="handle"></i>
<div class="group selection">
<button disabled class="drop" aria-label="Select features"><svg><use href="#i-select"/></svg></button>
<button disabled class="drop" aria-label="Select by value"><svg><use href="#i-form"/></svg></button>
<button class="drop" aria-label="Deselect"><svg><use href="#i-desel"/></svg></button>
<button class="drop" aria-label="Select by location"><svg><use href="#i-selloc"/></svg></button>
</div>
<i class="handle"></i>
<div class="group attributes">
<button aria-label="Identify features"><svg><use href="#i-ident"/></svg></button>
<button disabled aria-label="Field calculator"><svg><use href="#i-abacus"/></svg></button>
<button aria-label="Processing toolbox"><svg><use href="#i-gear"/></svg></button>
<button aria-label="Statistical summary"><svg><use href="#i-sigma"/></svg></button>
<button disabled class="drop" aria-label="Attribute table"><svg><use href="#i-table"/></svg></button>
<button class="drop" aria-label="Measure line"><svg><use href="#i-ruler"/></svg></button>
<button aria-label="Map tips"><svg><use href="#i-tip"/></svg></button>
<button disabled class="drop" aria-label="Run feature action"><svg><use href="#i-action"/></svg></button>
</div>
</div>
<div class="toolbar">
<i class="handle first"></i>
<div class="group sources">
<button aria-label="Data source manager"><svg><use href="#i-dsm"/></svg></button>
<button aria-label="New GeoPackage layer"><svg><use href="#i-newgpkg"/></svg></button>
<button aria-label="New shapefile layer"><svg><use href="#i-newshp"/></svg></button>
<button aria-label="New SpatiaLite layer"><svg><use href="#i-newspl"/></svg></button>
<button aria-label="New scratch layer"><svg><use href="#i-mem"/></svg></button>
<button aria-label="New mesh layer"><svg><use href="#i-mesh"/></svg></button>
<button aria-label="New virtual layer"><svg><use href="#i-virt"/></svg></button>
</div>
<i class="handle"></i>
<div class="group digitizing">
<button disabled class="corner" aria-label="Current edits"><svg><use href="#i-pencils"/></svg></button>
<button disabled aria-label="Toggle editing"><svg><use href="#i-pencil"/></svg></button>
<button disabled aria-label="Save layer edits"><svg><use href="#i-saveed"/></svg></button>
<button disabled class="drop" aria-label="Digitize"><svg><use href="#i-line"/></svg></button>
<button disabled aria-label="Add feature"><svg><use href="#i-points"/></svg></button>
<button disabled class="drop" aria-label="Vertex tool"><svg><use href="#i-vertex"/></svg></button>
<button disabled aria-label="Modify attributes"><svg><use href="#i-attr"/></svg></button>
<button disabled aria-label="Delete selected"><svg><use href="#i-del"/></svg></button>
<button disabled aria-label="Cut"><svg><use href="#i-cut"/></svg></button>
<button disabled aria-label="Copy"><svg><use href="#i-copy"/></svg></button>
<button disabled aria-label="Paste"><svg><use href="#i-paste"/></svg></button>
<button disabled aria-label="Undo"><svg><use href="#i-undo"/></svg></button>
<button disabled aria-label="Redo"><svg><use href="#i-redo"/></svg></button>
</div>
<i class="handle"></i>
<div class="group labeling">
<button disabled aria-label="Layer labeling"><svg><use href="#i-lab"/></svg></button>
<button disabled aria-label="Layer diagrams"><svg><use href="#i-diag"/></svg></button>
<i class="sep"></i>
<button aria-label="Highlight pinned labels"><svg><use href="#i-pinlab"/></svg></button>
<button aria-label="Toggle unplaced labels"><svg><use href="#i-redlab"/></svg></button>
<i class="sep"></i>
<button disabled aria-label="Pin labels"><svg><use href="#i-lpin"/></svg></button>
<button disabled aria-label="Show labels"><svg><use href="#i-leye"/></svg></button>
<button disabled aria-label="Move label"><svg><use href="#i-lmove"/></svg></button>
<button disabled aria-label="Rotate label"><svg><use href="#i-lrot"/></svg></button>
<button disabled aria-label="Change label"><svg><use href="#i-ledit"/></svg></button>
</div>
<i class="handle"></i>
<div class="group"><button aria-label="MetaSearch"><svg><use href="#i-search"/></svg></button></div>
<i class="handle"></i>
<div class="group"><button aria-label="Python console"><svg><use href="#i-py"/></svg></button></div>
<i class="handle"></i>
<div class="group"><button aria-label="Help contents"><svg><use href="#i-help"/></svg></button></div>
<i class="handle"></i>
</div>

<main class="work">
<aside class="docks">
<section class="dock browser">
<div class="dockhead"><h2>Browser</h2><button aria-label="Float"><svg><use href="#i-float"/></svg></button><button aria-label="Close"><svg><use href="#i-x"/></svg></button></div>
<div class="tools">
<button aria-label="Add selected layers"><svg><use href="#i-addlay"/></svg></button>
<button aria-label="Refresh"><svg><use href="#i-refresh"/></svg></button>
<button aria-label="Filter browser"><svg><use href="#i-funnel"/></svg></button>
<button aria-label="Collapse all"><svg><use href="#i-collapse"/></svg></button>
<button aria-label="Properties"><svg><use href="#i-info"/></svg></button>
</div>
<div class="view">
<ul class="list">
<li><svg><use href="#i-star"/></svg>Favorites</li>
<li class="exp"><svg><use href="#i-bm"/></svg>Spatial Bookmarks</li>
<li class="exp"><svg><use href="#i-home"/></svg>Home</li>
<li class="exp"><svg><use href="#i-folder"/></svg>C:\ (System)</li>
<li class="exp"><svg><use href="#i-folder"/></svg>D:\ (新加卷)</li>
<li><svg><use href="#i-gpkg"/></svg>GeoPackage</li>
<li><svg><use href="#i-feather"/></svg>SpatiaLite</li>
<li><svg><use href="#i-pg"/></svg>PostgreSQL</li>
<li><svg><use href="#i-hana"/></svg>SAP HANA</li>
<li><svg><use href="#i-mssql"/></svg>MS SQL Server</li>
<li><svg><use href="#i-oracle"/></svg>Oracle</li>
<li><svg><use href="#globe"/></svg>WMS/WMTS</li>
</ul>
<div class="scroll"><span class="up"></span><span class="thumb low"></span><span class="down"></span></div>
</div>
</section>
<div class="grip"><i></i></div>
<section class="dock layers">
<div class="dockhead"><h2>Layers</h2><button aria-label="Float"><svg><use href="#i-float"/></svg></button><button aria-label="Close"><svg><use href="#i-x"/></svg></button></div>
<div class="tools wide">
<button aria-label="Layer styling"><svg><use href="#i-brush"/></svg></button>
<button aria-label="Add group"><svg><use href="#i-group"/></svg></button>
<button class="menu themes" aria-label="Map themes"><svg><use href="#i-eye"/></svg></button>
<button class="menu" aria-label="Filter legend"><svg><use href="#i-funnel"/></svg></button>
<button class="side" disabled aria-label="Filter by expression"><svg><use href="#i-eps"/></svg></button>
<button aria-label="Expand all"><svg><use href="#i-expand"/></svg></button>
<button aria-label="Collapse all"><svg><use href="#i-collapse"/></svg></button>
<button aria-label="Remove layer"><svg><use href="#i-remlay"/></svg></button>
</div>
<div class="view">
<div class="list">
<div class="layer current"><input type="checkbox" id="l0" checked><svg><use href="#i-raster"/></svg><label for="l0">Rasterized</label><button class="chip" aria-label="Temporary layer"><svg><use href="#i-chip"/></svg></button></div>
<div class="band">Band 1 (Gray)</div>
<div class="ramp"><i></i><div><span>21,130</span><span>19,323</span></div></div>
<div class="layer"><input type="checkbox" id="l1"><i class="dot pink2"></i><label for="l1">CN466121 — WRECKS</label></div>
<div class="layer"><input type="checkbox" id="l2"><i class="dot purple"></i><label for="l2">CN466121 — UWTROC</label></div>
<div class="layer"><input type="checkbox" id="l3"><i class="dot pink"></i><label for="l3">CN466121 — PYLONS</label></div>
<div class="layer"><input type="checkbox" id="l4"><i class="dot gold"></i><label for="l4">CN466121 — LNDRGN</label></div>
<div class="layer"><input type="checkbox" id="l5"><i class="dot purple"></i><label for="l5">CN466121 — LIGHTS</label></div>
<div class="layer"><input type="checkbox" id="l6"><i class="dot gold"></i><label for="l6">CN466121 — TS_FEB</label></div>
<div class="layer"><input type="checkbox" id="l7"><i class="dot green"></i><label for="l7">CN466121 — TOPMAR</label></div>
<div class="layer"><input type="checkbox" id="l8"><i class="dot brown"></i><label for="l8">CN466121 — SOUNDG</label></div>
<div class="layer"><input type="checkbox" id="l9"><i class="dot pink"></i><label for="l9">CN466121 — GATCON</label></div>
<div class="layer"><input type="checkbox" id="l10"><i class="dot green"></i><label for="l10">CN466121 — BOYSPP</label></div>
<div class="layer"><input type="checkbox" id="l11"><i class="dot brown"></i><label for="l11">CN466121 — CTNARE</label></div>
<div class="layer"><input type="checkbox" id="l12"><i class="dot red2"></i><label for="l12">CN466121 — SISTAW</label></div>
<div class="layer"><input type="checkbox" id="l13"><i class="dot pink"></i><label for="l13">CN466121 — SEAARE</label></div>
<div class="layer"><input type="checkbox" id="l14"><i class="dot green"></i><label for="l14">CN466121 — OFSPLF</label></div>
<div class="layer"><input type="checkbox" id="l15"><i class="dot gold"></i><label for="l15">CN466121 — SBDARE</label></div>
<div class="layer"><input type="checkbox" id="l16"><i class="dot pink"></i><label for="l16">CN466121 — BUISGL</label></div>
<div class="layer"><input type="checkbox" id="l17"><i class="dot green"></i><label for="l17">CN466121 — BOYLAT</label></div>
</div>
<div class="scroll"><span class="up"></span><span class="thumb long"></span><span class="down"></span></div>
</div>
</section>
</aside>
<section class="map">
<svg class="canvas" aria-label="Map canvas">
<g transform="translate(-724 -184)">
<g class="vector">
<g transform="translate(720 180) scale(.4847 .4464)"><path d="M8 100H944L950 116 1197 728 1205 752 1208 967 1197 1003 1182 1053 1141 1127 1090 1215 1030 1300 970 1346 912 1395 860 1424 737 1479 668 1473 606 1448 549 1422 491 1400 435 1371 351 1322 322 1300 262 1265 213 1228 182 1212 155 1198 130 1181 113 1155 97 1117 87 1106 72 1102 29 1111 8 1126z"/><path fill-rule="evenodd" d="M327 1340L311 1372 300 1392 428 1450 437 1436 407 1420 424 1385 415 1382 399 1415 392 1416 320 1383 336 1342z"/></g>
<g transform="translate(1450 180) scale(.70727 .3954)"><path d="M116 100V131L120 142 135 146 137 168 148 228 157 290 168 367 170 386 168 395 156 432 140 462 74 546 72 684 80 750 98 850 118 975V1050L117 1072 176 1160 200 1190 230 1218 274 1256 290 1273H364L389 1260 465 1228 543 1194 545 1262 485 1288 445 1318 424 1335 398 1381 407 1417 470 1447 485 1449 570 1465 656 1476 790 1464 833 1451 911 1420 1045 1364 1066 1342 1142 1278 1160 1258 1253 1184 1266 1135 1290 1052 1302 1002 1356 985 1444 955 1446 942 1434 888 1398 842 1497 805 1532 682 1563 560 1575 510V100z"/></g>
<g transform="translate(720 960) scale(.75254 .3333)"><path d="M0 116H150L200 109H262L316 128 345 146 390 178 444 238 477 276 534 348 553 390 568 405H575L607 365 655 309 716 296 771 371 845 470 866 502H880L893 470 895 455 885 435 874 408 872 342 885 285 898 257 930 262 945 275 1000 332 1062 415 1171 568 1244 660 1317 758 1407 882 1465 965 1530 1091V1120H0z"/></g>
</g>
<g transform="translate(725 238) scale(13.69 10.86)" shape-rendering="crispEdges">
<path fill="#d7191c" d="M0-5H33V0H34V3H35V6H36V9H37V12H38V15H39V18H40V21H41V23H42V38H41V40H40V42H39V44H38V46H37V47H36V49H35V50H33V51H32V52H31V53H30V54H28V55H21V54H19V53H17V52H16V51H15V52H14V50H13V49H12V50H11V48H10V47H9V46H8V45H6V44H5V43H4V42H3V40H0zM10 51h1v1h-1zM11 52h2v1h-2zM13 53h2v1h-2z"/>
<path fill="#fdbc72" d="M59-5V0H60V3H61V8H62V9H61V11H60V12H59V13H58V14H57V23H58V28H59V34H60V35H61V36H62V37H63V38H64V39H66V40H67V41H73V40H77V39H80V38H81V41H78V42H76V43H75V44H74V46H75V47H78V48H96V47H100V46H103V45H107V44H108V43H110V42H112V41H113V40H115V39H117V38H118V36H119V33H120V31H123V30H127V29H128V27H126V26H125V25H128V24H130V23H131V21H132V18H133V15H200V-5z"/>
<path fill="#4494b9" d="M0 70H17V71H20V72H22V73H24V74H25V75H27V76H28V77H29V78H30V79H32V78H33V77H35V76H40V77H42V78H43V79H44V80H45V81H47V82H48V81H49V80H48V79H47V77H48V75H49V74H50V75H53V76H54V77H56V78H57V79H58V80H60V81H61V82H62V83H64V84H65V85H66V86H68V87H69V88H70V89H72V90H73V91H74V92H76V93H77V94H78V95H79V96H80V97H81V98H82V99H83V120H0z"/>
</g>
</g>
</svg>
<div class="message">
<svg class="tickmark" viewBox="0 0 36 26"><path d="M1 5l8 7L35 1 9 25z" fill="url(#tick)" stroke="#0b7a12" stroke-width="1.500"/></svg>
<p><b>Layer Exported:</b> Successfully saved vector layer to <a href="#ocean">ocean.shp</a></p>
<button aria-label="Dismiss"><svg viewBox="0 0 26 26"><circle cx="13" cy="13" r="12.500" fill="#333"/><path d="M8 8l10 10M18 8L8 18" stroke="#fff" stroke-width="3.500"/></svg></button>
</div>
</section>
</main>

<footer class="status">
<div class="locator"><svg viewBox="0 0 20 20"><circle cx="8" cy="8" r="6.500" fill="none" stroke="#888" stroke-width="1.600"/><path d="M12.500 13l6 6" stroke="#888" stroke-width="2.200"/></svg><input type="text" aria-label="Locate" placeholder="Type to locate (Ctrl+K)"></div>
<label class="coordlabel" for="coord">Coordinate</label>
<input class="coord" id="coord" type="text" value="24.4328° , 117.8821°">
<button class="extent" aria-label="Toggle extents"><svg viewBox="0 0 24 24"><ellipse cx="10" cy="8" rx="6" ry="7.500" fill="#fff" stroke="#000" stroke-width="2" transform="rotate(-20 10 8)"/><path d="M7 3l3 9M11 2l1 9" stroke="#000" stroke-width="2.500"/><path d="M2 12l8 8M1 17h4M20 3l3-2M18 8l4-3M17 4h2" stroke="#000" stroke-width="1.500"/><circle cx="15" cy="17" r="6" fill="#fff" stroke="#000" stroke-width="2"/><circle cx="15" cy="17" r="2.500" fill="#fff" stroke="#000" stroke-width="1.500"/></svg></button>
<label for="scale">Scale</label>
<span class="combo"><select id="scale"><option>1:8077</option></select></span>
<button class="lock" aria-label="Lock scale"><svg viewBox="0 0 20 24"><path d="M5 12V7a5 5 0 0110 0v5" fill="none" stroke="#666" stroke-width="3"/><path d="M5 12V7a5 5 0 0110 0v5" fill="none" stroke="#ddd" stroke-width="1"/><rect x="1" y="11" width="18" height="12.500" rx="2" fill="#666"/></svg></button>
<label for="mag">Magnifier</label>
<span class="spin"><input id="mag" type="text" value="100%"><span><button aria-label="Increase magnifier"></button><button aria-label="Decrease magnifier"></button></span></span>
<label class="rot" for="rot">Rotation</label>
<span class="spin"><input id="rot" type="text" value="0.0 °"><span><button aria-label="Increase rotation"></button><button aria-label="Decrease rotation"></button></span></span>
<input class="render" id="render" type="checkbox" checked><label for="render">Render</label>
<button class="crs"><svg viewBox="0 0 24 24"><path d="M8 1h8l3 4 4 6-4 7-7 5-7-5-4-7 4-6z" fill="#777"/><path d="M1 11h22M12 1v22M5 5h14M4 17h16M9 1Q4 12 11 22M15 1q5 11-2 21" stroke="#eee" fill="none"/></svg>EPSG:4326</button>
<button class="log" aria-label="Messages"><svg viewBox="0 0 24 24"><path d="M12 1c6 0 11 4 11 9.500 0 4-2 6.500-4 8l3 4.500c-4 0-6-1.500-8-3.200C7 20.500 1 17 1 10.500 1 5 6 1 12 1z" fill="#555"/><circle cx="7" cy="10" r="1.600" fill="#fff"/><circle cx="12" cy="10" r="1.600" fill="#fff"/><circle cx="17" cy="10" r="1.600" fill="#fff"/></svg></button>
</footer>
<div class="taskedge"><i></i></div>
</body>
</html>
```

FILE: styles.css
```css
* { box-sizing: border-box; }
html, body { height: 100%; margin: 0; }
body {
  display: flex;
  flex-direction: column;
  overflow: hidden;
  background: #efefef;
  color: #000;
  font: 18px/27px "Open Sans", "Noto Sans CJK SC", sans-serif;
}
button, input, select { margin: 0; padding: 0; border: 0; background: none; color: inherit; font: inherit; }
button svg { display: block; }
h2, p, ul { margin: 0; padding: 0; font-size: inherit; font-weight: 400; }
i { font-style: normal; }
.paints { position: absolute; width: 0; height: 0; }
.sprite { display: none; }
.glyph { font-family: "Open Sans", sans-serif; fill: #333; }
.heavy { font-weight: 800; fill: #111; }
.info { font-family: "Liberation Serif", serif; font-style: italic; font-weight: 700; fill: #fff; }
.lab { font-family: "Liberation Serif", serif; fill: #77745f; }
.dark { fill: #222; }
.red { fill: #e00; }
.help { font-family: "Liberation Serif", serif; fill: #fff; }

.titlebar { flex: none; display: flex; align-items: center; height: 34px; background: #f3f3f3; font-size: 17px; }
.logo { width: 24px; height: 24px; margin: 0 6px 0 2px; }
.winbtns { display: flex; margin-left: auto; }
.winbtns button { display: flex; justify-content: center; align-items: center; width: 70px; height: 34px; }
.winbtns svg { width: 16px; height: 16px; }

.menubar { flex: none; display: flex; gap: 1px; height: 31px; padding-left: 5px; border-bottom: 2px solid #d6d6d6; background: #f0f0f0; }
.menubar button { padding: 0 11px; line-height: 27px; }
.menubar u { text-underline-offset: 3px; text-decoration-thickness: 1px; }

.toolbar { flex: none; display: flex; align-items: center; height: 58px; border-bottom: 2px solid #b8b8b8; background: linear-gradient(#fafafa, #eeeeee); }
.toolbar + .toolbar { height: 59px; }
.handle { flex: none; width: 26px; height: 26px; background: radial-gradient(circle at 1px 1px, #b4b4b4 1px, transparent 1px) 14px 0 / 4px 5px; background-clip: content-box; padding: 0 4px 0 14px; }
.handle.first { width: 21px; padding: 0 6px 0 7px; }
.group { display: flex; justify-content: space-between; align-items: center; }
.project { width: 295px; }
.navigate { width: 790px; }
.selection { width: 268px; }
.attributes { width: 450px; }
.sources { width: 342px; }
.digitizing { width: 677px; }
.labeling { width: 468px; }
.toolbar button { display: flex; align-items: center; justify-content: center; width: 48px; height: 46px; border: 1px solid transparent; border-radius: 3px; }
.toolbar svg { width: 36px; height: 36px; }
.toolbar .on { border: 2px solid #b2b2b2; background: #dcdcdc; }
.toolbar button:disabled svg { opacity: .36; }
.toolbar .drop { width: 66px; justify-content: flex-start; gap: 9px; padding-left: 5px; }
.drop::after, .side::after, .menu::after, .corner::after { content: ""; flex: none; border: 6px solid transparent; border-top: 8px solid #555; border-bottom: 0; }
button:disabled::after { border-top-color: #a4a4a4; }
.toolbar .corner { position: relative; }
.corner::after { position: absolute; right: 2px; bottom: 2px; border-width: 6px 5px 0; }
.sep { width: 2px; height: 28px; background: #c8c8c8; }

.work { flex: 1; min-height: 0; display: grid; grid-template: minmax(0, 1fr) / 724px 1fr; }
.docks { display: flex; flex-direction: column; min-height: 0; padding-right: 10px; border-right: 1px solid #b5b5b5; }
.dock { display: flex; flex-direction: column; }
.browser { flex: none; height: 404px; }
.layers { flex: 1; min-height: 0; }
.dockhead { flex: none; display: flex; gap: 5px; align-items: center; height: 30px; padding: 0 2px 0 6px; }
.dockhead h2 { flex: 1; }
.dockhead svg { width: 16px; height: 16px; }
.tools { flex: none; display: flex; align-items: center; gap: 14px; height: 46px; padding: 0 0 2px 12px; }
.tools svg { width: 24px; height: 24px; }
.tools.wide { height: 58px; padding-bottom: 4px; }
.tools .menu { display: flex; width: 36px; position: relative; }
.tools .themes { margin-left: 5px; }
.tools .menu::after { position: absolute; right: 2px; bottom: -9px; border-width: 7px 5px 0; }
.tools .side { display: flex; align-items: center; gap: 13px; }
.tools .side svg { opacity: .6; }
.view { flex: 1; min-height: 0; display: flex; border: 1px solid #c2c2c2; border-top: 0; border-right: 0; background: #fff; }
.list { flex: 1; min-width: 0; overflow: hidden; list-style: none; }
ul li { display: flex; align-items: center; gap: 10px; height: 27px; padding-left: 29px; }
ul li svg { width: 24px; height: 24px; }
ul li.exp { padding-left: 9px; }
.exp::before { content: ""; border: 7px solid transparent; border-left: 7px solid #555; border-right: 0; margin-right: 3px; }
.scroll { width: 21px; display: flex; flex-direction: column; background: linear-gradient(90deg, #f1f1f1, #fff); }
.scroll .up, .scroll .down { flex: none; height: 20px; display: flex; justify-content: center; align-items: center; border: 1px solid #ddd; border-bottom-color: #bbb; background: #fbfbfb; }
.up::after, .down::after { content: ""; border: 6px solid transparent; border-top: 0; border-bottom: 7px solid #555; }
.down::after { border-bottom: 0; border-top: 7px solid #555; }
.thumb { margin-top: auto; border: 1px solid #d4d4d4; border-top: 2px solid #bbb; background: #e5e5e5; }
.low { height: 97px; }
.long { height: 410px; }
.grip { flex: none; height: 10px; display: flex; justify-content: center; align-items: center; }
.grip i { width: 24px; height: 2px; background: repeating-linear-gradient(90deg, #bbb 0 2px, transparent 2px 4px); }

.layer { display: flex; align-items: center; height: 27px; padding-left: 35px; color: #808080; font-size: 20px; font-weight: 700; font-style: italic; }
.layer.current { position: relative; height: 28px; background: #efefef; color: #000; font-size: 18px; font-style: normal; }
.current::before { content: ""; position: absolute; left: 10px; top: 11px; border: 6px solid transparent; border-top: 8px solid #555; border-bottom: 0; }
.current svg { width: 24px; height: 24px; margin: 0 9px 0 9px; }
.current label { flex: 1; text-decoration: underline; text-decoration-thickness: 2px; text-underline-offset: 3px; }
.chip { border: 1px solid #ccc; border-radius: 2px; background: #f7f7f7; width: 26px; height: 26px; margin-right: 18px; }
.chip svg { width: 24px; height: 24px; margin: 0; }
input[type="checkbox"] { appearance: none; flex: none; width: 21px; height: 21px; border: 2px solid #b9b9b9; background: #fff; }
input[type="checkbox"]:checked { display: grid; place-items: center; }
input[type="checkbox"]:checked::after { content: ""; width: 7px; height: 13px; border: solid #000; border-width: 0 3px 3px 0; transform: rotate(35deg); }
.dot { flex: none; width: 9px; height: 9px; margin: 0 19px 0 16px; border: 1px solid #444; border-radius: 50%; }
.pink { background: #e8718d; }
.pink2 { background: #e0507a; }
.purple { background: #987db7; }
.gold { background: #d5b43c; }
.green { background: #7fb56a; }
.brown { background: #91522d; }
.red2 { background: #b7484b; }
.band { height: 25px; padding-left: 65px; line-height: 24px; }
.ramp { display: flex; gap: 9px; height: 145px; padding: 1px 0 0 65px; font: 17px/22px "Liberation Mono", monospace; }
.ramp i { width: 24px; background: linear-gradient(#2b83ba, #abdda4 25%, #ffffbf 50%, #fdae61 75%, #d7191c); }
.ramp div { display: flex; flex-direction: column; justify-content: space-between; }

.map { position: relative; overflow: hidden; background: #fff; border-bottom: 1px solid #b5b5b5; }
.canvas { position: absolute; inset: 2px 0 0 0; width: 100%; height: 100%; }
.vector path { fill: #f4a3b0; stroke: #232323; stroke-width: 1.5px; vector-effect: non-scaling-stroke; }
.message { position: absolute; inset: 2px 0 auto 0; display: flex; align-items: center; height: 47px; padding: 0 33px 0 14px; border: 1px solid #8f9c8b; border-bottom-width: 2px; background: #dff0d8; font: 18px/27px "Liberation Mono", monospace; }
.message p { flex: 1; padding-top: 5px; }
.message a { color: #2a8000; text-underline-offset: 3px; }
.tickmark { width: 35px; height: 26px; margin-right: 15px; }
.message button svg { width: 26px; height: 26px; }

.status { flex: none; display: flex; align-items: center; height: 43px; padding: 0 9px 0 6px; font: 17px/24px "Liberation Mono", monospace; }
.status input[type="text"], .combo, .spin { height: 32px; border: 2px solid #b0b0b0; border-radius: 3px; background: #fff; }
.locator { position: relative; width: 426px; }
.locator svg { position: absolute; left: 12px; top: 7px; width: 20px; height: 20px; }
.locator input { width: 100%; padding-left: 41px; }
.locator input::placeholder { color: #808080; }
.coordlabel { margin-left: auto; }
.coord { width: 215px; margin: 0 7px 0 3px; padding-left: 2px; }
.extent, .log, .crs svg { width: 24px; height: 24px; }
.extent { margin-right: 19px; }
.extent svg, .log svg { width: 24px; height: 24px; }
.combo { display: flex; align-items: center; width: 137px; margin: 0 19px 0 4px; background: linear-gradient(90deg, #fff 104px, #ccc 104px 105px, #f4f4f4 105px); }
.combo select { appearance: none; flex: 1; padding-left: 4px; height: 28px; }
.combo::after { content: ""; border: 6px solid transparent; border-top: 8px solid #666; border-bottom: 0; margin-right: 9px; }
.lock svg { width: 20px; height: 24px; margin-right: 8px; }
.spin { display: flex; width: 141px; margin-left: 4px; }
.status .spin input { flex: 1; min-width: 0; height: 28px; border: 0; padding-left: 5px; }
.spin > span { display: flex; flex-direction: column; justify-content: center; gap: 5px; width: 20px; border-left: 2px solid #b0b0b0; align-items: center; }
.spin button { border: 6px solid transparent; border-top: 0; border-bottom: 8px solid #555; }
.spin button + button { border-bottom: 0; border-top: 8px solid #555; }
.rot { margin-left: 14px; }
.rot + .spin { margin-left: 10px; }
.status .render { margin: 0 8px 0 11px; }
.crs { display: flex; align-items: center; gap: 2px; margin-left: 21px; }
.log { margin-left: 43px; }
.taskedge { flex: none; display: flex; justify-content: center; align-items: flex-end; height: 10px; border-top: 2px solid #444; background: #1b1b1b; }
.taskedge i { width: 58px; height: 4px; margin-left: 596px; border-radius: 3px 3px 0 0; background: #2e2e2e; }
```
